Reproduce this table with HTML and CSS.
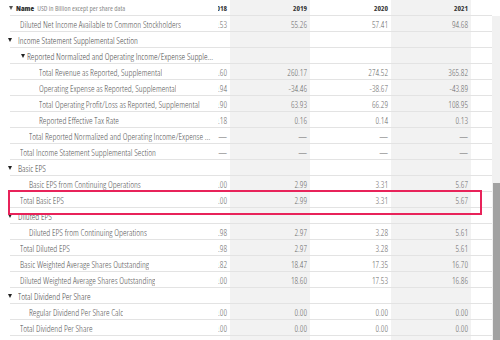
FILE: index.html
```html
<!DOCTYPE html>
<html lang="en">
<head>
<meta charset="utf-8">
<title>Income Statement</title>
<link rel="stylesheet" href="styles.css">
</head>
<body>
<div class="sheet">
  <div class="row head">
    <div class="label th"><span class="tog"></span><b class="name">Name</b><span class="unit">USD in Billion except per share data</span></div>
    <div class="cell y18">2018</div>
    <div class="cell alt">2019</div>
    <div class="cell">2020</div>
    <div class="cell alt">2021</div>
    <div class="fill"></div>
  </div>
  <div class="body">
    <div class="rows">
      <div class="row"><div class="label d1"><span class="txt">Diluted Net Income Available to Common Stockholders</span></div><div class="cell y18">59.53</div><div class="cell alt">55.26</div><div class="cell">57.41</div><div class="cell alt">94.68</div><div class="fill"></div></div>
      <div class="row"><div class="label t0"><span class="tog"></span><span class="txt">Income Statement Supplemental Section</span></div><div class="cell y18"></div><div class="cell alt"></div><div class="cell"></div><div class="cell alt"></div><div class="fill"></div></div>
      <div class="row"><div class="label t1"><span class="tog"></span><span class="txt">Reported Normalized and Operating Income/Expense Supplemental Section</span></div><div class="cell y18"></div><div class="cell alt"></div><div class="cell"></div><div class="cell alt"></div><div class="fill"></div></div>
      <div class="row"><div class="label d3"><span class="txt">Total Revenue as Reported, Supplemental</span></div><div class="cell y18">265.60</div><div class="cell alt">260.17</div><div class="cell">274.52</div><div class="cell alt">365.82</div><div class="fill"></div></div>
      <div class="row"><div class="label d3"><span class="txt">Operating Expense as Reported, Supplemental</span></div><div class="cell y18">-30.94</div><div class="cell alt">-34.46</div><div class="cell">-38.67</div><div class="cell alt">-43.89</div><div class="fill"></div></div>
      <div class="row"><div class="label d3"><span class="txt">Total Operating Profit/Loss as Reported, Supplemental</span></div><div class="cell y18">70.90</div><div class="cell alt">63.93</div><div class="cell">66.29</div><div class="cell alt">108.95</div><div class="fill"></div></div>
      <div class="row"><div class="label d3"><span class="txt">Reported Effective Tax Rate</span></div><div class="cell y18">0.18</div><div class="cell alt">0.16</div><div class="cell">0.14</div><div class="cell alt">0.13</div><div class="fill"></div></div>
      <div class="row"><div class="label d2"><span class="txt">Total Reported Normalized and Operating Income/Expense Supplemental Section</span></div><div class="cell y18">—</div><div class="cell alt">—</div><div class="cell">—</div><div class="cell alt">—</div><div class="fill"></div></div>
      <div class="row"><div class="label d1"><span class="txt">Total Income Statement Supplemental Section</span></div><div class="cell y18">—</div><div class="cell alt">—</div><div class="cell">—</div><div class="cell alt">—</div><div class="fill"></div></div>
      <div class="row"><div class="label t0"><span class="tog"></span><span class="txt">Basic EPS</span></div><div class="cell y18"></div><div class="cell alt"></div><div class="cell"></div><div class="cell alt"></div><div class="fill"></div></div>
      <div class="row"><div class="label d2"><span class="txt">Basic EPS from Continuing Operations</span></div><div class="cell y18">3.00</div><div class="cell alt">2.99</div><div class="cell">3.31</div><div class="cell alt">5.67</div><div class="fill"></div></div>
      <div class="row marked"><div class="label d1"><span class="txt">Total Basic EPS</span></div><div class="cell y18">3.00</div><div class="cell alt">2.99</div><div class="cell">3.31</div><div class="cell alt">5.67</div><div class="fill"></div></div>
      <div class="row"><div class="label t0"><span class="tog"></span><span class="txt">Diluted EPS</span></div><div class="cell y18"></div><div class="cell alt"></div><div class="cell"></div><div class="cell alt"></div><div class="fill"></div></div>
      <div class="row"><div class="label d2"><span class="txt">Diluted EPS from Continuing Operations</span></div><div class="cell y18">2.98</div><div class="cell alt">2.97</div><div class="cell">3.28</div><div class="cell alt">5.61</div><div class="fill"></div></div>
      <div class="row"><div class="label d1"><span class="txt">Total Diluted EPS</span></div><div class="cell y18">2.98</div><div class="cell alt">2.97</div><div class="cell">3.28</div><div class="cell alt">5.61</div><div class="fill"></div></div>
      <div class="row"><div class="label d1"><span class="txt">Basic Weighted Average Shares Outstanding</span></div><div class="cell y18">19.82</div><div class="cell alt">18.47</div><div class="cell">17.35</div><div class="cell alt">16.70</div><div class="fill"></div></div>
      <div class="row"><div class="label d1"><span class="txt">Diluted Weighted Average Shares Outstanding</span></div><div class="cell y18">20.00</div><div class="cell alt">18.60</div><div class="cell">17.53</div><div class="cell alt">16.86</div><div class="fill"></div></div>
      <div class="row"><div class="label t0"><span class="tog"></span><span class="txt">Total Dividend Per Share</span></div><div class="cell y18"></div><div class="cell alt"></div><div class="cell"></div><div class="cell alt"></div><div class="fill"></div></div>
      <div class="row"><div class="label d2"><span class="txt">Regular Dividend Per Share Calc</span></div><div class="cell y18">0.00</div><div class="cell alt">0.00</div><div class="cell">0.00</div><div class="cell alt">0.00</div><div class="fill"></div></div>
      <div class="row"><div class="label d1"><span class="txt">Total Dividend Per Share</span></div><div class="cell y18">0.00</div><div class="cell alt">0.00</div><div class="cell">0.00</div><div class="cell alt">0.00</div><div class="fill"></div></div>
      <div class="row"><div class="label d1"><span class="txt"></span></div><div class="cell y18"></div><div class="cell alt"></div><div class="cell"></div><div class="cell alt"></div><div class="fill"></div></div>
    </div>
    <div class="track"><div class="thumb"></div></div>
  </div>
</div>
</body>
</html>
```
FILE: styles.css
```css
* { box-sizing: border-box; }
html, body { margin: 0; padding: 0; background: #fff; }
body {
  width: 500px;
  height: 340px;
  overflow: hidden;
  font-family: "Open Sans", "Liberation Sans", sans-serif;
  font-stretch: 75%;
  font-weight: 300;
  font-size: 8.8px;
  color: #555;
}
.sheet { display: flex; flex-direction: column; width: 500px; }
.row {
  display: grid;
  grid-template-columns: 218px 12px 80px 81px 80px 21px;
  grid-template-rows: 15px;
  height: 16px;
  padding-bottom: 1px;
  width: 492px;
  background: linear-gradient(#e3e3e3, #e3e3e3) no-repeat 10px 100% / calc(100% - 10px) 1px;
}
.head { font-weight: 700; color: #333; }
.label {
  display: flex;
  align-items: center;
  min-width: 0;
  overflow: hidden;
  white-space: nowrap;
  font-size: 9.1px;
  padding-top: 2px;
  padding-right: 4px;
}
.txt { overflow: hidden; text-overflow: ellipsis; min-width: 0; flex: 0 1 auto; }
.d1 { padding-left: 20px; }
.d2 { padding-left: 29px; }
.d3 { padding-left: 39px; }
.t0 { padding-left: 8px; color: #4a4a4a; }
.t1 { padding-left: 21px; color: #4a4a4a; }
.t0 .tog { margin-right: 6px; }
.t1 .tog { margin-right: 2px; }
.tog {
  flex: none;
  width: 0;
  height: 0;
  margin-top: -1px;
  border-left: 2.5px solid transparent;
  border-right: 2.5px solid transparent;
  border-top: 4px solid #222;
}
.th { padding-left: 9px; padding-top: 1px; }
.th .tog { margin-right: 3px; border-top-color: #555; }
.name { font-size: 7.5px; color: #333; margin-right: 3px; }
.unit { font-size: 7.2px; font-weight: 400; color: #8a8a8a; }
.cell {
  display: flex;
  align-items: center;
  justify-content: flex-end;
  padding-top: 2px;
  padding-right: 3px;
  overflow: hidden;
  white-space: nowrap;
  color: #6a6a6a;
}
.head .cell { font-size: 7.5px; color: #333; padding-top: 1px; }
.alt { background: #f2f2f2; }
.body {
  display: flex;
  height: 324px;
  overflow: hidden;
}
.rows { flex: none; width: 492px; }
.track { flex: none; width: 8px; background: #f1f1f1; }
.thumb { width: 7px; margin-left: 1px; margin-top: 167px; height: 200px; background: #a2a2a2; }
.marked { position: relative; z-index: 2; }
.marked::after {
  content: "";
  position: absolute;
  left: 8px;
  top: -2px;
  width: 470px;
  height: 21px;
  border: 2px solid #e8235a;
  pointer-events: none;
}
```
